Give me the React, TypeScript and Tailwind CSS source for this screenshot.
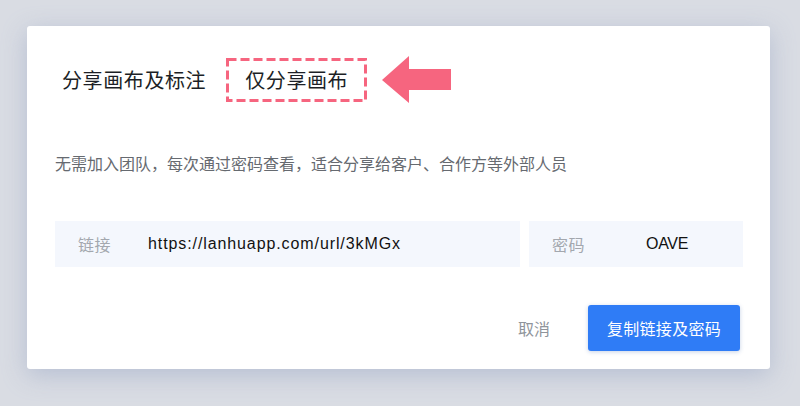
import type { FC } from 'react';

const cjk = "font-['Noto_Sans_CJK_SC',sans-serif]";

const Arrow: FC = () => (
  <svg width="70" height="48" viewBox="0 0 70 48" className="block">
    <polygon points="0,24 27,0 27,13 69,13 69,34 27,34 27,47" fill="#f6657f" />
  </svg>
);

// dashed highlight frame around the second tab
const DashFrame: FC = () => (
  <svg width="141" height="44" viewBox="0 0 141 44" className="pointer-events-none absolute inset-0">
    <rect x="1.5" y="1.5" width="138" height="41" fill="none" stroke="#f6657f" strokeWidth="3" strokeDasharray="9 4" />
  </svg>
);

const App: FC = () => {
  return (
    <div className={`h-[406px] w-[800px] bg-[#d9dce3] pt-[26px] pl-[27px] ${cjk}`}>
      <div className="flex h-[343px] w-[743px] flex-col rounded-[3px] bg-white pt-[32px] pr-[27px] pb-[18px] pl-[28px] shadow-[0_6px_24px_rgba(140,155,190,0.45)]">
        {/* tabs */}
        <div className="flex h-[44px] items-center">
          <div className="pl-[7px] text-[20px] leading-[44px] tracking-[0.6px] text-[#1c1f26]">
            分享画布及标注
          </div>
          <div className="relative ml-[20px] flex h-[44px] w-[141px] items-center justify-center text-[20px] tracking-[0.6px] text-[#1c1f26]">
            仅分享画布
            <DashFrame />
          </div>
          <div className="ml-[15px]">
            <Arrow />
          </div>
        </div>

        <p className="mt-[49px] text-[16px] leading-[24px] text-[#666a70]">
          无需加入团队，每次通过密码查看，适合分享给客户、合作方等外部人员
        </p>

        {/* link + password */}
        <div className="mt-[46px] flex gap-[9px]">
          <div className="flex h-[46px] flex-1 items-center bg-[#f4f7fd] pl-[23px]">
            <span className="w-[70px] text-[16px] tracking-[0.5px] text-[#a3a7ae]">链接</span>
            <span className="font-['Liberation_Sans',sans-serif] text-[16px] tracking-[0.9px] text-[#111]">
              https://lanhuapp.com/url/3kMGx
            </span>
          </div>
          <div className="flex h-[46px] w-[214px] items-center bg-[#f4f7fd] pl-[23px]">
            <span className="w-[94px] text-[16px] tracking-[0.5px] text-[#a3a7ae]">密码</span>
            <span className="font-['Liberation_Sans',sans-serif] text-[16px] tracking-[-0.3px] text-[#111]">OAVE</span>
          </div>
        </div>

        {/* actions */}
        <div className="mt-auto flex items-center justify-end gap-[38px] pr-[3px]">
          <button className="text-[16px] text-[#8f949b]">取消</button>
          <button className="h-[46px] w-[152px] rounded-[3px] bg-[#2f7cf6] text-[16px] tracking-[0.3px] text-white shadow-[0_1px_4px_rgba(30,80,160,0.25)]">
            复制链接及密码
          </button>
        </div>
      </div>
    </div>
  );
};

export default App;
